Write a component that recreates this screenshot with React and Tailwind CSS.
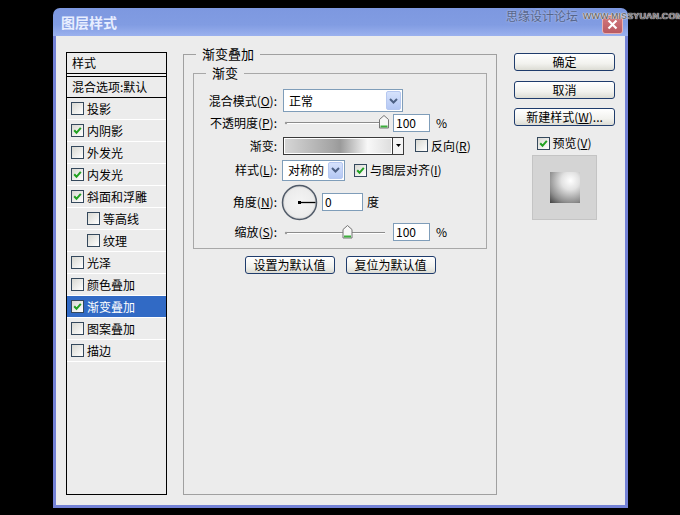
import React from "react";

function CB({ checked }) {
  return (
    <span className="w-[13px] h-[13px] shrink-0 border border-[#34485c] bg-[linear-gradient(135deg,#d8d8d2,#ffffff)] flex items-center justify-center">
      {checked && (
        <svg width="9" height="9" viewBox="0 0 9 9">
          <path d="M1.2 4.3 L3.5 6.8 L7.8 1.8" stroke="#21a121" strokeWidth="2" fill="none" />
        </svg>
      )}
    </span>
  );
}

function U({ children }) {
  return <span className="underline">{children}</span>;
}

function Chevron() {
  return (
    <span className="w-[15px] h-[19px] my-[1px] mr-[1px] rounded-[2px] border border-[#b6c8f0] bg-[linear-gradient(to_bottom,#d6e2fc,#b4c8f4)] flex items-center justify-center">
      <svg width="9" height="6" viewBox="0 0 9 6">
        <path d="M1 1 L4.5 4.5 L8 1" stroke="#4d6185" strokeWidth="2" fill="none" />
      </svg>
    </span>
  );
}

function Slider({ cx }) {
  return (
    <svg width="106" height="19" className="shrink-0">
      <line x1="3" y1="9.5" x2="102" y2="9.5" stroke="#8c8c8c" />
      <line x1="3" y1="10.5" x2="102" y2="10.5" stroke="#ffffff" />
      <circle cx="3" cy="10" r="1.2" fill="#9a9a9a" />
      <polygon
        points={`${cx - 4.5},6.5 ${cx},2.5 ${cx + 4.5},6.5 ${cx + 4.5},15 ${cx - 4.5},15`}
        fill="#f7f7f7"
        stroke="#747474"
      />
      <rect x={cx - 3.5} y="12.5" width="7" height="2" fill="#3cae3c" />
    </svg>
  );
}

function Btn({ children, w }) {
  return (
    <div
      className={`${w} h-[18px] rounded-[3px] border border-[#1f3c6c] bg-[linear-gradient(to_bottom,#ffffff,#f2f2ee_60%,#dcdcd4)] flex items-center justify-center text-[12px] leading-[14px] text-black`}
    >
      {children}
    </div>
  );
}

function Item({ label, checked, indent, selected }) {
  return (
    <div
      className={`h-[22px] border-b border-white flex items-center gap-[3px] ${indent ? "pl-[20px]" : "pl-[4px]"} ${selected ? "bg-[#316ac5] text-white" : "text-black"}`}
    >
      <CB checked={checked} />
      <span className="text-[12px] leading-[14px]">{label}</span>
    </div>
  );
}

export default function App() {
  return (
    <div className="w-[680px] h-[515px] bg-black relative overflow-hidden pl-[53px] pt-[8px] font-['Noto_Sans_CJK_SC',sans-serif] text-black">
      <div className="w-[575px] h-[500px] flex flex-col">
        {/* title bar */}
        <div className="h-[28px] rounded-t-[7px] bg-[linear-gradient(to_bottom,#7d98e0,#819ce2_60%,#9bb1ee)] flex items-center pl-[8px] pr-[5px]">
          <span className="text-[14px] leading-[16px] font-bold text-[#e8eeff]">图层样式</span>
          <div className="ml-auto mt-[4px] w-[21px] h-[19px] rounded-[3px] border border-[#e8b0b0] bg-[linear-gradient(to_bottom,#d4787c,#b85a62)] flex items-center justify-center">
            <svg width="11" height="11" viewBox="0 0 11 11">
              <path d="M1.5 1.5 L9.5 9.5 M9.5 1.5 L1.5 9.5" stroke="#ffffff" strokeWidth="2.2" />
            </svg>
          </div>
        </div>
        {/* body */}
        <div className="flex-1 border-x-[3px] border-b-[3px] border-[#7482d6] bg-[#ececec] flex items-start pl-[10px] pt-[11px]">
          {/* left list */}
          <div className="mt-[5px] w-[101px] h-[443px] border border-black bg-[#ececec]">
            <div className="h-[20px] flex items-center pl-[5px] text-[12px] leading-[14px]">样式</div>
            <div className="h-[4px] border-y border-black bg-[#f4f4f4]" />
            <div className="h-[21px] flex items-center pl-[5px] text-[12px] leading-[14px] border-b border-black">混合选项:默认</div>
            <Item label="投影" />
            <Item label="内阴影" checked />
            <Item label="外发光" />
            <Item label="内发光" checked />
            <Item label="斜面和浮雕" checked />
            <Item label="等高线" indent />
            <Item label="纹理" indent />
            <Item label="光泽" />
            <Item label="颜色叠加" />
            <Item label="渐变叠加" checked selected />
            <Item label="图案叠加" />
            <Item label="描边" />
          </div>

          {/* main group */}
          <fieldset className="ml-[16px] w-[314px] h-[448px] border border-[#a0a0a0] px-[9px] pb-0 pt-0 m-0 min-w-0">
            <legend className="ml-[3px] px-[6px] text-[13px] leading-[14px]">渐变叠加</legend>
            <fieldset className="mt-[5px] border border-[#a8a8a8] p-0 pb-[7px] m-0 min-w-0">
              <legend className="ml-[12px] px-[6px] text-[13px] leading-[14px]">渐变</legend>
              <div className="flex flex-col pt-[9px] text-[12px] leading-[14px]">
                {/* row 1 */}
                <div className="h-[23px] flex items-center">
                  <span className="w-[83px] text-right">混合模式(<U>O</U>):</span>
                  <div className="ml-[6px] w-[120px] h-[23px] border border-[#7f9db9] bg-white flex items-center">
                    <span className="pl-[5px]">正常</span>
                    <span className="ml-auto"><Chevron /></span>
                  </div>
                </div>
                {/* row 2 */}
                <div className="mt-[1px] h-[19px] flex items-center">
                  <span className="w-[83px] text-right">不透明度(<U>P</U>):</span>
                  <span className="ml-[6px]"><Slider cx={101} /></span>
                  <div className="ml-[4px] w-[37px] h-[18px] border border-[#7f9db9] bg-white flex items-center pl-[2px]">100</div>
                  <span className="ml-[6px]">%</span>
                </div>
                {/* row 3 */}
                <div className="mt-[4px] h-[19px] flex items-center">
                  <span className="w-[83px] text-right">渐变:</span>
                  <div className="ml-[6px] w-[110px] h-[18px] border border-[#3a3a3a] p-[1px] bg-white">
                    <div className="w-full h-full bg-[linear-gradient(to_right,#d6d6d6_0%,#a4a4a4_45%,#9a9a9a_52%,#f8f8f8_78%,#dedede_100%)]" />
                  </div>
                  <div className="w-[11px] h-[18px] border border-l-0 border-[#3a3a3a] bg-[#f4f4f4] flex items-center justify-center">
                    <svg width="5" height="3" viewBox="0 0 5 3"><path d="M0 0 L5 0 L2.5 3 Z" fill="#000" /></svg>
                  </div>
                  <span className="ml-[11px]"><CB /></span>
                  <span className="ml-[3px]">反向(<U>R</U>)</span>
                </div>
                {/* row 4 */}
                <div className="mt-[5px] h-[20px] flex items-center">
                  <span className="w-[83px] text-right">样式(<U>L</U>):</span>
                  <div className="ml-[5px] w-[63px] h-[21px] border border-[#7f9db9] bg-white flex items-center">
                    <span className="pl-[5px]">对称的</span>
                    <span className="ml-auto flex"><span className="w-[15px] h-[17px] my-[1px] mr-[1px] rounded-[2px] border border-[#b6c8f0] bg-[linear-gradient(to_bottom,#d6e2fc,#b4c8f4)] flex items-center justify-center"><svg width="9" height="6" viewBox="0 0 9 6"><path d="M1 1 L4.5 4.5 L8 1" stroke="#4d6185" strokeWidth="2" fill="none" /></svg></span></span>
                  </div>
                  <span className="ml-[9px]"><CB checked /></span>
                  <span className="ml-[3px]">与图层对齐(<U>I</U>)</span>
                </div>
                {/* row 5 */}
                <div className="mt-[4px] h-[36px] flex items-center">
                  <span className="w-[83px] text-right">角度(<U>N</U>):</span>
                  <svg width="37" height="37" viewBox="0 0 37 37" className="ml-[4px] shrink-0">
                    <defs>
                      <radialGradient id="dial" cx="50%" cy="50%" r="50%">
                        <stop offset="0%" stopColor="#f4f4f4" />
                        <stop offset="85%" stopColor="#ececec" />
                        <stop offset="100%" stopColor="#d0d0d0" />
                      </radialGradient>
                    </defs>
                    <circle cx="18.5" cy="18.5" r="17" fill="url(#dial)" stroke="#505a68" strokeWidth="1.5" />
                    <line x1="18.5" y1="18.5" x2="34.5" y2="18.5" stroke="#000" strokeWidth="1.3" />
                    <rect x="17" y="17" width="3" height="3" fill="#000" />
                  </svg>
                  <div className="ml-[4px] w-[41px] h-[18px] border border-[#7f9db9] bg-white flex items-center pl-[2px]">0</div>
                  <span className="ml-[4px]">度</span>
                </div>
                {/* row 6 */}
                <div className="mt-[3px] h-[18px] flex items-center">
                  <span className="w-[83px] text-right">缩放(<U>S</U>):</span>
                  <span className="ml-[6px]"><Slider cx={64.5} /></span>
                  <div className="ml-[4px] w-[37px] h-[18px] border border-[#7f9db9] bg-white flex items-center pl-[2px]">100</div>
                  <span className="ml-[6px]">%</span>
                </div>
              </div>
            </fieldset>
            <div className="mt-[7px] flex justify-center gap-[11px]">
              <Btn w="w-[90px]">设置为默认值</Btn>
              <Btn w="w-[90px]">复位为默认值</Btn>
            </div>
          </fieldset>

          {/* right column */}
          <div className="ml-[17px] mt-[6px] w-[101px] flex flex-col items-center">
            <Btn w="w-[101px]">确定</Btn>
            <div className="h-[10px]" />
            <Btn w="w-[101px]">取消</Btn>
            <div className="h-[9px]" />
            <Btn w="w-[101px]">新建样式(<U>W</U>)...</Btn>
            <div className="mt-[10px] flex items-center gap-[2px] text-[12px] leading-[14px]">
              <CB checked />
              <span>预览(<U>V</U>)</span>
            </div>
            <div className="mt-[5px] w-[65px] h-[65px] border border-[#c4c4c4] bg-[#d4d4d4] flex items-center justify-center">
              <div className="w-[30px] h-[31px] bg-[radial-gradient(circle_at_68%_28%,#ffffff_0%,#e2e2e2_30%,#8e8e8e_72%,#404040_100%)]" />
            </div>
          </div>
        </div>
      </div>

      {/* watermark */}
      <div className="absolute left-[506px] top-[9px] flex items-center gap-[5px] whitespace-nowrap">
        <span className="text-[12px] leading-[14px] text-[#56658a] [text-shadow:0_0_2px_#c8d2ee]">思缘设计论坛</span>
        <span className="text-[9px] leading-[11px] font-bold tracking-[0.1px] text-[#707070] font-['Liberation_Sans',sans-serif] [text-shadow:0_0_1px_#ffffff,0_0_1px_#ffffff]">WWW.MISSYUAN.COM</span>
      </div>
    </div>
  );
}
